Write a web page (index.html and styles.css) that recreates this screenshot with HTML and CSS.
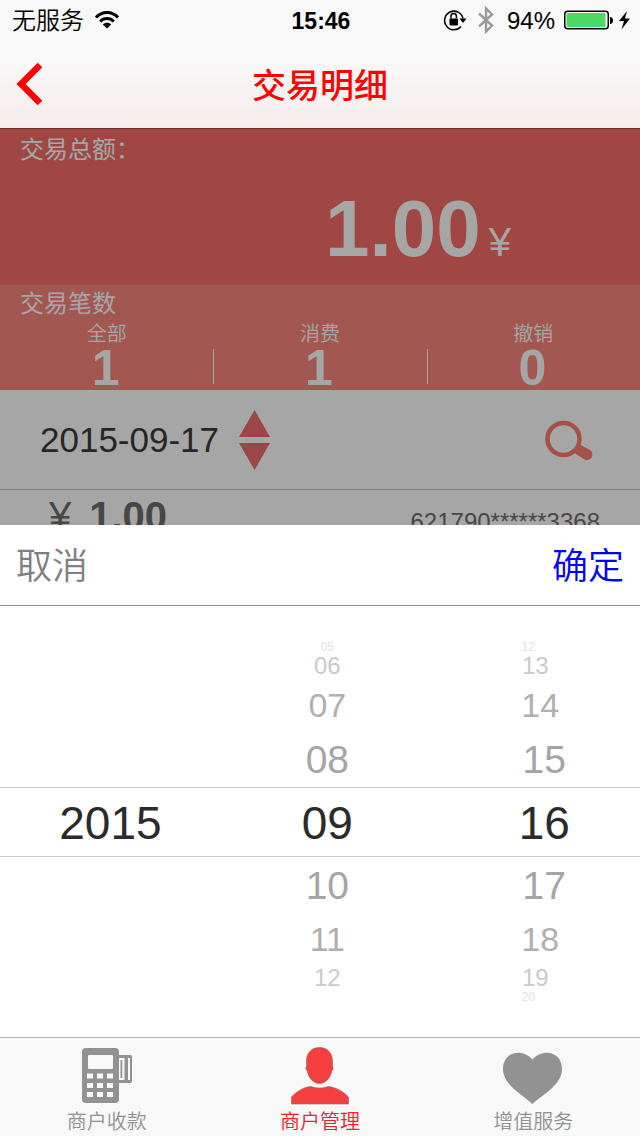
FILE: index.html
```html
<!DOCTYPE html>
<html lang="zh-CN">
<head>
<meta charset="utf-8">
<meta name="viewport" content="width=device-width, initial-scale=1">
<title>交易明细</title>
<link rel="stylesheet" href="styles.css">
</head>
<body>
<div class="app">
  <header class="top">
    <div class="status">
      <div class="status-side">
        <span class="carrier">无服务</span>
        <svg class="wifi" width="26" height="20" viewBox="0 0 26 20" aria-hidden="true">
          <g fill="none" stroke="#000" stroke-width="3"><path d="M2 7.500C8 .8 18 .8 24 7.500"/><path d="M6.200 11.500C10 7.600 16 7.600 19.800 11.500"/></g>
          <path d="M8.800 14.400C11 12.200 15 12.200 17.200 14.400L13 18.500Z"/>
        </svg>
      </div>
      <time class="clock">15:46</time>
      <div class="status-side status-right">
        <svg width="24" height="22" viewBox="0 0 24 22" aria-hidden="true">
          <path d="M18 17.500A9.300 9.300 0 1 1 20 9.500" fill="none" stroke="#000" stroke-width="1.500"/>
          <path d="M16.500 9.500h7l-3.500 4.500z"/><rect x="6.500" y="9.500" width="8.500" height="7" rx="1"/>
          <path d="M8 9.500V7.300a2.700 2.700 0 0 1 5.400 0v2.200" fill="none" stroke="#000" stroke-width="1.500"/>
        </svg>
        <svg class="bluetooth" width="16" height="28" viewBox="0 0 16 28" aria-hidden="true">
          <path d="M1 7.500l13 12-6 6V2.500l6 6-13 12" fill="none" stroke="#999" stroke-width="2.400"/>
        </svg>
        <span class="percent">94%</span>
        <svg width="66" height="20" viewBox="0 0 66 20" aria-hidden="true">
          <rect x=".75" y="1.250" width="43.500" height="17.500" rx="3" fill="#fff" stroke="#000" stroke-width="1.500"/>
          <rect x="2.500" y="3" width="39" height="14" rx="1" fill="#4cd964"/>
          <path d="M46 7c4 0 4 7 0 7z"/><path d="M63 1l-8 10h5l-2.500 8.500L66 8.500h-5z"/>
        </svg>
      </div>
    </div>
    <div class="nav">
      <button class="back" type="button" aria-label="返回">
        <svg width="30" height="44" viewBox="0 0 30 44"><path d="M24 3L5 22l19 19" fill="none" stroke="#f00" stroke-width="6.500"/></svg>
      </button>
      <h1 class="title">交易明细</h1>
    </div>
  </header>

  <main class="content">
    <section class="total">
      <h2 class="label label-colon">交易总额：</h2>
      <p class="amount"><strong>1.00</strong><span class="yen">¥</span></p>
    </section>
    <section class="counts">
      <h2 class="label">交易笔数</h2>
      <dl class="stats">
        <div class="stat"><dt>全部</dt><dd>1</dd></div>
        <div class="stat"><dt>消费</dt><dd>1</dd></div>
        <div class="stat"><dt>撤销</dt><dd>0</dd></div>
      </dl>
    </section>
    <div class="filter">
      <button class="date" type="button">2015-09-17
        <svg width="31" height="60" viewBox="0 0 31 60" fill="#ee6d70" aria-hidden="true"><path d="M15.500 0L31 27H0zM15.500 60L31 33H0z"/></svg>
      </button>
      <button class="search" type="button" aria-label="查询">
        <svg width="49" height="42" viewBox="0 0 49 42"><circle cx="18.500" cy="20" r="16" fill="none" stroke="#fe7d72" stroke-width="4.500"/><path d="M33 24.500l12 6.500a5.500 5.500 0 0 1-5.500 9.500L28 33z" fill="#fe7d72"/></svg>
      </button>
    </div>
    <div class="record">
      <span class="yen">¥</span><strong class="record-amount">1.00</strong>
      <span class="card">621790******3368</span>
    </div>

    <div class="scrim"></div>
    <section class="sheet" role="dialog" aria-label="选择日期">
      <div class="sheet-bar">
        <button class="cancel" type="button">取消</button>
        <button class="confirm" type="button">确定</button>
      </div>
      <div class="wheel">
        <ul class="column" role="listbox" aria-label="年">
          <li class="row selected" role="option" aria-selected="true">2015</li>
        </ul>
        <ul class="column" role="listbox" aria-label="月">
          <li class="row edge" role="option">05</li>
          <li class="row far" role="option">06</li>
          <li class="row mid" role="option">07</li>
          <li class="row near" role="option">08</li>
          <li class="row selected" role="option" aria-selected="true">09</li>
          <li class="row near" role="option">10</li>
          <li class="row mid" role="option">11</li>
          <li class="row far" role="option">12</li>
          <li class="row edge" role="presentation"></li>
        </ul>
        <ul class="column days" role="listbox" aria-label="日">
          <li class="row edge" role="option">12</li>
          <li class="row far" role="option">13</li>
          <li class="row mid" role="option">14</li>
          <li class="row near" role="option">15</li>
          <li class="row selected" role="option" aria-selected="true">16</li>
          <li class="row near" role="option">17</li>
          <li class="row mid" role="option">18</li>
          <li class="row far" role="option">19</li>
          <li class="row edge" role="option">20</li>
        </ul>
      </div>
    </section>
  </main>

  <nav class="tabs">
    <a class="tab" href="#collect">
      <svg width="60" height="60" viewBox="0 0 60 60" aria-hidden="true">
        <path d="M40 8h13a2 2 0 0 1 2 2v24a2 2 0 0 1-2 2H40z" fill="#929292"/>
        <path d="M42 11h5.500v22H42zM51 11h2v22h-2z" fill="#f8f8f8"/><path d="M43.500 13h1.800v18h-1.800z" fill="#929292"/>
        <rect x="5" y="1" width="37" height="55" rx="4" fill="#929292"/>
        <path d="M12 8h23a1 1 0 0 1 1 1v12a1 1 0 0 1-1 1H12a1 1 0 0 1-1-1V9a1 1 0 0 1 1-1zM10 26.500h6v5h-6zM20 26.500h6v5h-6zM30 26.500h6v5h-6zM10 36h6v5h-6zM20 36h6v5h-6zM30 36h6v5h-6zM10 45h6v5h-6zM20 45h6v5h-6zM30 45h6v5h-6z" fill="#f8f8f8"/>
      </svg>
      <span>商户收款</span>
    </a>
    <a class="tab active" href="#manage" aria-current="page">
      <svg width="60" height="60" viewBox="0 0 60 60" fill="#f64040" stroke="#8d6260" stroke-width=".6" aria-hidden="true">
        <path d="M29.500 .5C38 .5 42.500 6.500 42.500 14v5.500c1 .5 .8 3.500-.8 4.500C40.500 31 35.500 36.500 29.500 36.500S18.500 31 17.300 24c-1.600-1-1.800-4-.8-4.500V14C16.500 6.500 21 .5 29.500 .5z"/>
        <path d="M1.500 57v-7C7 44 14 40 21 39.500c5.500 2 11.500 2 17 0 7 .5 15 4.500 20.500 10.500v7z"/>
      </svg>
      <span>商户管理</span>
    </a>
    <a class="tab" href="#services">
      <svg width="60" height="60" viewBox="0 0 60 60" fill="#929292" aria-hidden="true"><path d="M29.500 57C20 48 0 38 0 22 0 4 20 1 29.500 12.500 39 1 59 4 59 22 59 38 39 48 29.500 57z"/></svg>
      <span>增值服务</span>
    </a>
  </nav>
</div>
</body>
</html>
```
FILE: styles.css
```css
* { box-sizing: border-box; }
body, h1, h2, p, ul, dl, dd { margin: 0; padding: 0; }
body { font-family: "Liberation Sans", "Noto Sans CJK SC", sans-serif; color: #000; }
button { border: 0; padding: 0; background: none; font: inherit; color: inherit; cursor: pointer; }
svg { display: block; flex: none; }
li { list-style: none; }

.app { min-height: 100vh; display: flex; flex-direction: column; }

.top { background: linear-gradient(#f8f8f8 45%, #f6ecec); }
.status { height: 40px; padding: 0 10px 0 12px; display: grid; grid-template-columns: 1fr auto 1fr; align-items: center; font-size: 24px; }
.status-side { display: flex; align-items: center; gap: 10px; }
.status-right { justify-content: flex-end; gap: 9px; }
.bluetooth { margin: 0 4px 0 2px; }
.carrier { font-weight: 350; line-height: 32px; padding-top: 2px; }
.clock { font-weight: 700; font-size: 23px; padding-top: 2px; }
.percent { padding-top: 2px; }
.nav { height: 88px; padding: 0 16px; display: grid; grid-template-columns: 1fr auto 1fr; align-items: center; }
.back { justify-self: start; }
.title { font-size: 34px; line-height: 48px; font-weight: 500; color: #f00; padding-top: 4px; }

.content { flex: 1; position: relative; overflow: hidden; background: #fff; border-top: 1px solid #702c2e; }
.label { font-size: 24px; line-height: 38px; font-weight: 400; color: #fff; padding-left: 20px; }
.label-colon { font-family: "Noto Sans CJK TC", sans-serif; }
.total { height: 156px; background: #f66c67; color: #fff; }
.amount { display: flex; align-items: baseline; justify-content: flex-end; gap: 8px; padding-right: 129px; margin-top: 16px; font-size: 80px; line-height: 92px; }
.yen { font-size: 40px; font-weight: 400; }
.counts { background: #f9867d; color: #fff; height: 105px; }
.stats { display: grid; grid-template-columns: repeat(3, 1fr); }
.stat { position: relative; text-align: center; }
.stat dt { font-size: 20px; line-height: 22px; font-weight: 350; }
.stat dd { font-size: 50px; line-height: 46px; font-weight: 700; padding-right: 2px; }
.stat + .stat::before { content: ""; position: absolute; left: 0; bottom: 7px; height: 35px; border-left: 1px solid #fff; }

.filter { height: 100px; padding: 0 46px 0 40px; display: flex; align-items: center; justify-content: space-between; border-bottom: 1px solid #c8c8c8; }
.date { display: flex; align-items: center; gap: 20px; font-size: 35px; color: #3b3b3b; }
.record { padding: 2px 40px 0 49px; display: flex; align-items: baseline; color: #6d6d6d; }
.record-amount { font-size: 40px; line-height: 48px; margin-left: 18px; }
.card { margin-left: auto; font-size: 24px; }

.scrim { position: absolute; inset: 0; background: rgba(0, 0, 0, .35); }
.sheet { position: absolute; left: 0; right: 0; bottom: 0; background: #fff; }
.sheet-bar { height: 81px; padding: 0 16px 4px; display: flex; align-items: center; justify-content: space-between; border-bottom: 1px solid #929292; font-size: 36px; font-weight: 350; }
.cancel { color: #808080; }
.confirm { color: #00f; }

.wheel { height: 431px; padding-left: 2px; overflow: hidden; display: grid; grid-template-columns: repeat(3, 34%); align-items: center;
  background: linear-gradient(#c8c8c8, #c8c8c8) 0 181px / 100% 1px no-repeat, linear-gradient(#c8c8c8, #c8c8c8) 0 250px / 100% 1px no-repeat, #fff; }
.row { display: flex; align-items: center; justify-content: center; }
.selected { height: 70px; padding-top: 2px; font-size: 46px; color: #2b2b2b; }
.near { height: 56px; padding-top: 2px; font-size: 39px; color: #a5a5a5; }
.mid { height: 52px; padding-top: 2px; font-size: 34px; color: #b0b0b0; }
.far { height: 26px; font-size: 24px; line-height: 26px; color: #cacaca; }
.edge { height: 12px; font-size: 12px; line-height: 12px; color: #e2e2e2; }
.days .mid { padding-right: 8px; }
.days .far { padding-right: 18px; }
.days .edge { padding-right: 32px; }

.tabs { height: 99px; background: #f8f8f8; border-top: 1px solid #b0b0b0; display: grid; grid-template-columns: repeat(3, 1fr); }
.tab { display: flex; flex-direction: column; align-items: center; padding-top: 9px; font-size: 20px; line-height: 30px; font-weight: 350; color: #929292; text-decoration: none; }
.active { color: #f02030; }
```
